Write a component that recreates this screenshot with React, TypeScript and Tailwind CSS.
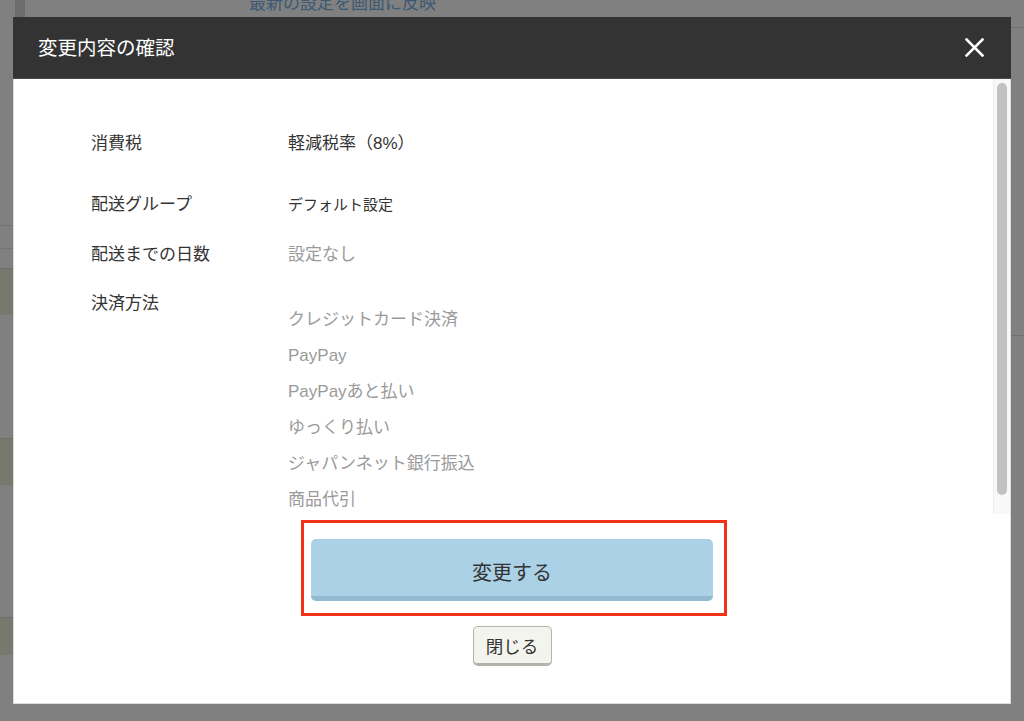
const FONT = "font-['Liberation_Sans','Noto_Sans_CJK_JP',sans-serif]";

const rows = [
  { label: '消費税', value: '軽減税率（8%）', tone: 'text-[#333] text-[17px]' },
  { label: '配送グループ', value: 'デフォルト設定', tone: 'text-[#333] text-[15px]' },
  { label: '配送までの日数', value: '設定なし', tone: 'text-[#9a9a9a] text-[17px]' },
];

const payments = [
  'クレジットカード決済',
  'PayPay',
  'PayPayあと払い',
  'ゆっくり払い',
  'ジャパンネット銀行振込',
  '商品代引',
];

// row spacing taken from the screenshot (label tops 130 / 191 / 241 / 290)
const rowGap = ['mb-[37px]', 'mb-[26px]', 'mb-[25px]'];

function Backdrop() {
  return (
    <div className="flex h-full">
      <aside className="flex w-[13px] flex-col">
        <div className="h-[225px]" />
        <div className="h-[23px] border-t border-[#747474]" />
        <div className="h-[20px] border-t border-[#747474]" />
        <div className="h-[47px] border-t border-[#6f6f6a] bg-[#78786f]" />
        <div className="h-[123px]" />
        <div className="h-[47px] border-t border-[#6f6f6a] bg-[#78786f]" />
        <div className="h-[132px]" />
        <div className="h-[38px] border-t border-[#6f6f6a] bg-[#78786f]" />
      </aside>
      <div className="flex flex-1 items-start">
        <div className="ml-[2px] h-[24px] w-[10px] rounded-b-full bg-[#6c6c6c]" />
        <p className="-mt-[8px] ml-[224px] text-[17px] leading-[24px] text-[#3c5873]">最新の設定を画面に反映</p>
      </div>
      <aside className="flex w-[13px] flex-col">
        <div className="h-[27px]" />
        <div className="h-[308px] border-t border-[#707070]" />
        <div className="border-t border-[#707070]" />
      </aside>
    </div>
  );
}

function CloseIcon() {
  return (
    <svg width="19" height="19" viewBox="0 0 19 19" fill="none">
      <path d="M1.5 1.5 17.5 17.5M17.5 1.5 1.5 17.5" stroke="#fff" strokeWidth="2.6" strokeLinecap="square" />
    </svg>
  );
}

export default function App() {
  return (
    <div className={`relative h-[721px] w-[1024px] overflow-hidden bg-[#808080] ${FONT}`}>
      <Backdrop />

      <div className="absolute left-[13px] top-[17px] flex h-[687px] w-[998px] flex-col">
        <header className="flex h-[62px] shrink-0 items-center justify-between border-b border-[#4a4a4a] bg-[#333] pl-[25px] pr-[27px]">
          <h2 className="mt-[3px] text-[19.5px] text-white">変更内容の確認</h2>
          <button className="mt-[-1px]">
            <CloseIcon />
          </button>
        </header>

        <div className="flex flex-1 flex-col border-x border-b border-[#dcdcdc] bg-white">
          <div className="flex h-[435px] shrink-0">
            <div className="flex-1 overflow-hidden pl-[77px] pt-[53px]">
              {rows.map((r, i) => (
                <div key={r.label} className={`flex items-center leading-[24px] ${rowGap[i]}`}>
                  <span className="w-[197px] text-[17px] text-[#333]">{r.label}</span>
                  <span className={r.tone}>{r.value}</span>
                </div>
              ))}
              <div className="flex leading-[24px]">
                <span className="w-[197px] text-[17px] text-[#333]">決済方法</span>
                <ul className="mt-[10px] text-[17px] leading-[36px] text-[#9a9a9a]">
                  {payments.map((p) => (
                    <li key={p}>{p}</li>
                  ))}
                </ul>
              </div>
            </div>
            <div className="w-[17px] border-l border-[#ececec] bg-[#f8f8f8] pl-[3px] pt-[4px]">
              <div className="h-[412px] w-[10px] rounded-full bg-[#c1c1c1]" />
            </div>
          </div>

          <div className="flex flex-col items-center pt-[6px]">
            <div className="ml-[4px] border-[3px] border-[#f3321a] pb-[12px] pl-[7px] pr-[11px] pt-[16px]">
              <button className="flex h-[62px] w-[402px] items-center justify-center rounded-[5px] border-b-[5px] border-[#93bad0] bg-[#abd1e6] pt-[10px] text-[20px] text-[#333]">
                変更する
              </button>
            </div>
            <button className="mt-[10px] flex h-[40px] w-[79px] items-center justify-center rounded-[5px] border border-b-[3px] border-[#b4b4ac] bg-[#f4f4ef] pt-[5px] text-[17.5px] text-[#333]">
              閉じる
            </button>
          </div>
        </div>
      </div>
    </div>
  );
}
